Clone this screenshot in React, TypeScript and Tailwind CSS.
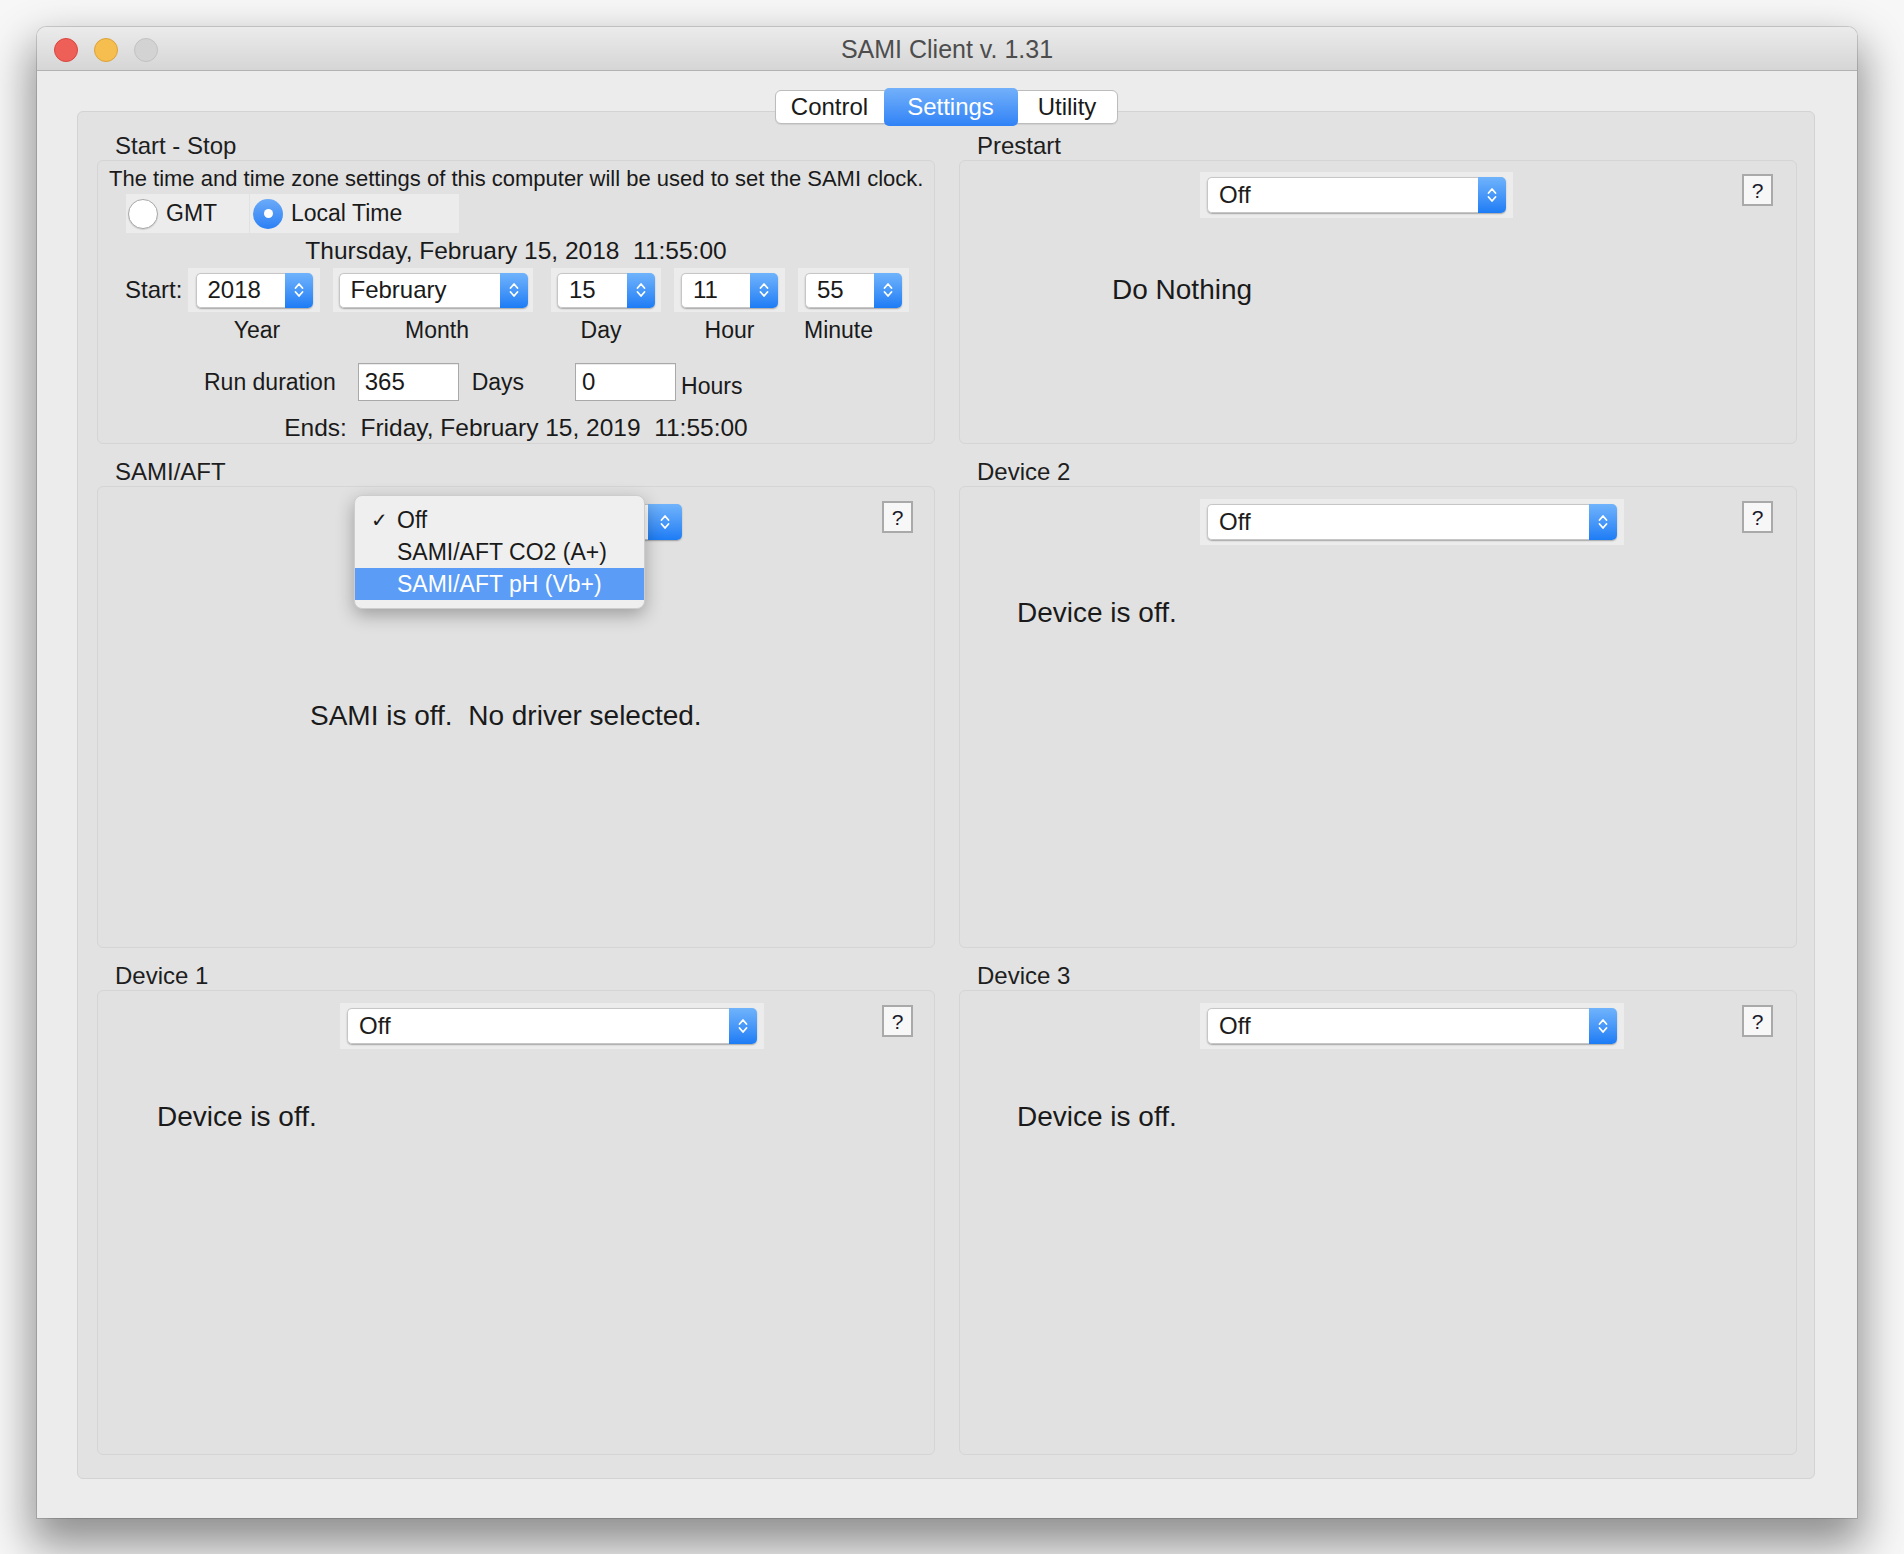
const Chevrons = () => (
  <svg width="12" height="20" viewBox="0 0 12 20" fill="none" stroke="#ffffff" strokeWidth="1.8" strokeLinecap="round" strokeLinejoin="round">
    <path d="M2.5 8 6 4 9.5 8" />
    <path d="M2.5 12 6 16 9.5 12" />
  </svg>
);

function PopUp({ inner, btn = "w-[28px]", value = "Off", plain = false }: { inner: string; btn?: string; value?: string; plain?: boolean }) {
  return (
    <div className={`px-[7px] py-[5px] ${plain ? "" : "bg-[#ececec]"}`}>
      <div className={`flex h-[36px] ${inner} rounded-[5px] shadow-[0_1px_1.5px_rgba(0,0,0,0.3)]`}>
        <div className="flex flex-1 items-center rounded-l-[5px] border border-r-0 border-[#c6c6c6] bg-white pl-[11px] text-[24px] text-[#1c1c1c]">
          {value}
        </div>
        <div className={`flex ${btn} items-center justify-center rounded-r-[5px] bg-linear-to-b from-[#6fb3fb] to-[#1b7cf5]`}>
          <Chevrons />
        </div>
      </div>
    </div>
  );
}

function Spinner({ bg, inner, value, label, labelCls = "" }: { bg: string; inner: string; value: string; label: string; labelCls?: string }) {
  return (
    <div className="flex flex-col items-center">
      <div className={`flex h-[44px] ${bg} items-center justify-center bg-[#ececec]`}>
        <div className={`flex h-[35px] ${inner} rounded-[5px] shadow-[0_1px_1.5px_rgba(0,0,0,0.3)]`}>
          <div className="flex flex-1 items-center rounded-l-[5px] border border-r-0 border-[#c6c6c6] bg-white pl-[11px] text-[24px]">
            {value}
          </div>
          <div className="flex w-[28px] items-center justify-center rounded-r-[5px] bg-linear-to-b from-[#6fb3fb] to-[#1b7cf5]">
            <Chevrons />
          </div>
        </div>
      </div>
      <div className={`mt-[4px] text-[23px] leading-[28px] ${labelCls}`}>{label}</div>
    </div>
  );
}

const Help = () => (
  <div className="flex h-[32px] w-[31px] items-center justify-center border-2 border-[#a9a9a9] bg-[#f7f7f7] text-[21px] leading-none text-[#1a1a2e]">
    ?
  </div>
);

function Section({ title, box, children }: { title: string; box: string; children?: React.ReactNode }) {
  return (
    <div className="flex flex-col">
      <div className="flex h-[28px] items-center pl-[18px] text-[24px] text-[#1e1e1e]">{title}</div>
      <div className={`relative rounded-[6px] border border-[#d5d5d5] bg-[#e1e1e1] ${box}`}>{children}</div>
    </div>
  );
}

function TopRow({ left, inner }: { left: string; inner: string }) {
  return (
    <div className={`flex items-start pt-[12px] ${left}`}>
      <PopUp inner={inner} />
      <div className="flex-1" />
      <div className="mt-[2px]">
        <Help />
      </div>
    </div>
  );
}

export default function App() {
  return (
    <div className="min-h-[1554px] w-[1904px] bg-[#f7f7f7] pl-[37px] pt-[27px] font-['Liberation_Sans',Arial,sans-serif] text-[#1a1a1a]">
      <div className="flex h-[1491px] w-[1820px] flex-col rounded-t-[9px] bg-[#ececec] shadow-[0_0_0_1px_rgba(0,0,0,0.14),0_22px_44px_6px_rgba(0,0,0,0.42)]">
        {/* title bar */}
        <div className="relative flex h-[44px] shrink-0 items-center justify-center rounded-t-[9px] border-b border-[#b2b2b2] bg-linear-to-b from-[#ebebeb] to-[#d6d6d6]">
          <div className="absolute left-[17px] top-[11px] flex gap-[16px]">
            <span className="h-[24px] w-[24px] rounded-full border border-[#d9463f] bg-[#ee5f58]" />
            <span className="h-[24px] w-[24px] rounded-full border border-[#dca23a] bg-[#f6be4f]" />
            <span className="h-[24px] w-[24px] rounded-full border border-[#c2c2c2] bg-[#d3d3d3]" />
          </div>
          <span className="pt-[2px] text-[25px] text-[#4d4d4d]">SAMI Client v. 1.31</span>
        </div>

        <div className="flex flex-col pl-[40px] pr-[42px]">
          {/* tabs */}
          <div className="relative z-10 flex justify-center pt-[19px]">
            <div className="flex h-[34px] items-stretch rounded-[6px] border border-[#bcbcbc] bg-white text-[24px] shadow-[0_1px_1px_rgba(0,0,0,0.08)]">
              <div className="flex w-[108px] items-center justify-center">Control</div>
              <div className="-my-[3px] flex w-[134px] items-center justify-center rounded-[5px] bg-linear-to-b from-[#72b0fa] to-[#2f82f6] text-white">
                Settings
              </div>
              <div className="flex w-[99px] items-center justify-center">Utility</div>
            </div>
          </div>

          {/* tab pane */}
          <div className="-mt-[13px] h-[1368px] rounded-[6px] border border-[#d3d3d3] bg-[#e2e2e2] pl-[19px] pr-[17px] pt-[20px]">
            <div className="grid grid-cols-[838px_838px] gap-x-[24px] gap-y-[14px]">
              <Section title="Start - Stop" box="h-[284px]">
                <div className="flex flex-col pt-[5px]">
                  <div className="whitespace-nowrap pl-[11px] text-[22px] leading-[26px]">
                    The time and time zone settings of this computer will be used to set the SAMI clock.
                  </div>
                  <div className="ml-[28px] mt-[2px] flex h-[39px] w-[333px]">
                    <div className="flex w-[123px] items-center bg-[#ececec] pl-[2px]">
                      <span className="h-[30px] w-[30px] rounded-full border border-[#a8a8a8] bg-white shadow-[0_1px_1px_rgba(0,0,0,0.12)]" />
                      <span className="ml-[8px] text-[23px]">GMT</span>
                    </div>
                    <div className="ml-[1px] flex flex-1 items-center bg-[#ececec] pl-[3px]">
                      <span className="flex h-[30px] w-[30px] items-center justify-center rounded-full bg-linear-to-b from-[#6aaaf8] to-[#2b80f5]">
                        <span className="h-[9px] w-[9px] rounded-full bg-white" />
                      </span>
                      <span className="ml-[8px] text-[23px]">Local Time</span>
                    </div>
                  </div>
                  <div className="mt-[4px] whitespace-pre text-center text-[24.5px] leading-[28px]">
                    {"Thursday, February 15, 2018  11:55:00"}
                  </div>
                  <div className="mt-[3px] flex items-start pl-[27px]">
                    <div className="flex h-[44px] w-[63px] items-center text-[24px]">Start:</div>
                    <Spinner bg="w-[132px]" inner="w-[117px]" value="2018" label="Year" labelCls="pl-[6px]" />
                    <div className="ml-[13px]">
                      <Spinner bg="w-[200px]" inner="w-[189px]" value="February" label="Month" labelCls="pl-[8px]" />
                    </div>
                    <div className="ml-[18px]">
                      <Spinner bg="w-[110px]" inner="w-[98px]" value="15" label="Day" labelCls="pr-[10px]" />
                    </div>
                    <div className="ml-[13px]">
                      <Spinner bg="w-[111px]" inner="w-[97px]" value="11" label="Hour" />
                    </div>
                    <div className="ml-[13px]">
                      <Spinner bg="w-[111px]" inner="w-[97px]" value="55" label="Minute" labelCls="pr-[30px]" />
                    </div>
                  </div>
                  <div className="mt-[19px] flex h-[38px] items-center pl-[106px] text-[23px]">
                    <span>Run duration</span>
                    <div className="ml-[22px] flex h-[38px] w-[101px] items-center border border-[#a9a9a9] bg-white pl-[6px] text-[24px] shadow-[inset_0_1px_0_rgba(0,0,0,0.08)]">
                      365
                    </div>
                    <span className="ml-[13px]">Days</span>
                    <div className="ml-[51px] flex h-[38px] w-[101px] items-center border border-[#a9a9a9] bg-white pl-[6px] text-[24px] shadow-[inset_0_1px_0_rgba(0,0,0,0.08)]">
                      0
                    </div>
                    <span className="ml-[5px] mt-[8px]">Hours</span>
                  </div>
                  <div className="mt-[13px] whitespace-pre text-center text-[24.5px] leading-[28px]">
                    {"Ends:  Friday, February 15, 2019  11:55:00"}
                  </div>
                </div>
              </Section>

              <Section title="Prestart" box="h-[284px]">
                <div className="flex items-start pl-[240px] pr-[23px] pt-[11px]">
                  <PopUp inner="w-[299px]" />
                  <div className="flex-1" />
                  <div className="mt-[2px]">
                    <Help />
                  </div>
                </div>
                <div className="mt-[55px] pl-[152px] text-[28px] leading-[34px]">Do Nothing</div>
              </Section>

              <Section title="SAMI/AFT" box="h-[462px]">
                <div className="flex items-start pl-[262px] pr-[21px] pt-[12px]">
                  <PopUp inner="w-[315px]" btn="w-[34px]" value="" plain />
                  <div className="flex-1" />
                  <div className="mt-[2px]">
                    <Help />
                  </div>
                </div>
                <div className="mt-[154px] whitespace-pre pl-[212px] text-[28px] leading-[34px]">
                  {"SAMI is off.  No driver selected."}
                </div>
                <div className="absolute left-[256px] top-[8px] w-[291px] rounded-[8px] border border-[#cdcdcd] bg-[#efefef] py-[8px] text-[23px] shadow-[0_6px_18px_rgba(0,0,0,0.3)]">
                  <div className="flex h-[32px] items-center">
                    <span className="w-[42px] pl-[16px] text-[20px]">✓</span>
                    <span>Off</span>
                  </div>
                  <div className="flex h-[32px] items-center pl-[42px]">SAMI/AFT CO2 (A+)</div>
                  <div className="flex h-[32px] items-center bg-[#5b9cf6] pl-[42px] text-white">SAMI/AFT pH (Vb+)</div>
                </div>
              </Section>

              <Section title="Device 2" box="h-[462px]">
                <TopRow left="pl-[240px] pr-[23px]" inner="w-[410px]" />
                <div className="mt-[51px] pl-[57px] text-[28px] leading-[34px]">Device is off.</div>
              </Section>

              <Section title="Device 1" box="h-[465px]">
                <TopRow left="pl-[242px] pr-[21px]" inner="w-[410px]" />
                <div className="mt-[51px] pl-[59px] text-[28px] leading-[34px]">Device is off.</div>
              </Section>

              <Section title="Device 3" box="h-[465px]">
                <TopRow left="pl-[240px] pr-[23px]" inner="w-[410px]" />
                <div className="mt-[51px] pl-[57px] text-[28px] leading-[34px]">Device is off.</div>
              </Section>
            </div>
          </div>
        </div>
      </div>
    </div>
  );
}
